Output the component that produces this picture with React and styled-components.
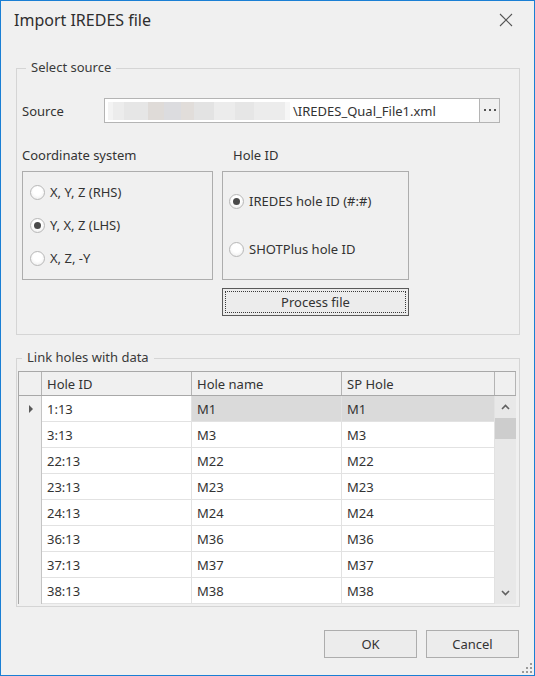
import React from 'react';
import styled, { createGlobalStyle } from 'styled-components';

const GlobalStyle = createGlobalStyle`
  html, body {
    margin: 0;
    padding: 0;
    background: #ffffff;
  }
  * {
    box-sizing: border-box;
  }
`;

const Window = styled.div`
  position: relative;
  width: 535px;
  height: 676px;
  border: 1px solid #1a7fd4;
  background: #f0f0f0;
  display: flex;
  flex-direction: column;
  font-family: 'Noto Sans', 'Open Sans', sans-serif;
  font-size: 13px;
  color: #333;
`;

const TitleBar = styled.div`
  height: 38px;
  display: flex;
  align-items: center;
  justify-content: space-between;
  padding: 0 21px 0 13px;
`;

const Title = styled.span`
  font-size: 16px;
  color: #2e2e2e;
`;

const Body = styled.div`
  flex: 1;
  display: flex;
  flex-direction: column;
  padding: 0 14px 0 15px;
`;

const GroupBox = styled.fieldset`
  margin: ${({ top }) => top}px 0 0;
  padding: ${({ pad }) => pad};
  min-width: 0;
  border: 1px solid #d5d5d5;
`;

const Legend = styled.legend`
  margin-left: 4px;
  padding: 0 5px 3px;
  line-height: 16px;
  color: #3a3a3a;
`;

const SourceRow = styled.div`
  display: flex;
  align-items: center;
  height: 25px;
`;

const FieldLabel = styled.span`
  width: 82px;
`;

const PathInput = styled.div`
  width: 376px;
  height: 25px;
  border: 1px solid #b4b4b4;
  background: #fff;
  display: flex;
  align-items: center;
  padding-left: 3px;
  overflow: hidden;
  white-space: nowrap;
`;

const Redacted = styled.span`
  width: 182px;
  height: 18px;
  margin-right: 3px;
  flex-shrink: 0;
  background: linear-gradient(
    90deg,
    #f3f3f3 0 3%,
    #ececec 3% 9%,
    #e6e6e6 9% 22%,
    #dfdbd8 22% 31%,
    #dcdcdf 31% 40%,
    #e1ddda 40% 47%,
    #e3e3e3 47% 58%,
    #ececec 58% 70%,
    #e6e6e6 70% 80%,
    #ececec 80% 97%,
    #f6f6f6 97% 100%
  );
`;

const DotsButton = styled.div`
  width: 20px;
  height: 25px;
  border: 1px solid #b4b4b4;
  border-left: none;
  background: #f0f0f0;
  display: flex;
  align-items: center;
  justify-content: center;
`;

const OptionsRow = styled.div`
  display: flex;
  gap: 9px;
  margin-top: 24px;
`;

const Column = styled.div`
  width: ${({ w }) => w}px;
  display: flex;
  flex-direction: column;
`;

const SectionLabel = styled.div`
  line-height: 16px;
  margin-bottom: 8px;
  padding-left: ${({ indent }) => indent || 0}px;
`;

const OptionBox = styled.div`
  height: 109px;
  border: 1px solid #adadad;
  display: flex;
  flex-direction: column;
  gap: ${({ gap }) => gap}px;
  padding: ${({ pt }) => pt}px 0 0 ${({ pl }) => pl}px;
`;

const RadioRow = styled.label`
  display: flex;
  align-items: center;
  height: 16px;
  gap: 5px;
`;

const RadioCircle = styled.span`
  position: relative;
  width: 15px;
  height: 15px;
  border-radius: 50%;
  border: 1px solid #b8b8b8;
  background: radial-gradient(circle at 50% 40%, #ffffff 40%, #e8e8e8 100%);
  flex-shrink: 0;

  &::after {
    content: '';
    display: ${({ checked }) => (checked ? 'block' : 'none')};
    position: absolute;
    left: 3px;
    top: 3px;
    width: 7px;
    height: 7px;
    border-radius: 50%;
    background: #4a4a4a;
  }
`;

const Button = styled.div`
  width: ${({ w }) => w}px;
  height: 28px;
  border: 1px solid ${({ focused }) => (focused ? '#5a5a5a' : '#adadad')};
  background: #ececec;
  display: flex;
  align-items: center;
  justify-content: center;
  margin-top: ${({ mt }) => mt || 0}px;
  padding: 2px;
`;

const FocusRect = styled.div`
  width: 100%;
  height: 100%;
  border: 1px dotted #3a3a3a;
  display: flex;
  align-items: center;
  justify-content: center;
`;

const Grid = styled.div`
  width: 498px;
  display: flex;
  flex-direction: column;
  border-top: 1px solid #a8a8a8;
  border-left: 1px solid #a8a8a8;
  background: #f0f0f0;
`;

const COLS = '23px 150px 150px 153px';

const HeaderRow = styled.div`
  display: grid;
  grid-template-columns: ${COLS} 21px;
  height: 24px;
  border-bottom: 1px solid #a8a8a8;
`;

const HeaderCell = styled.div`
  display: flex;
  align-items: center;
  padding-left: 5px;
  border-right: 1px solid #b4b4b4;
`;

const GridBody = styled.div`
  display: flex;
`;

const Rows = styled.div`
  display: flex;
  flex-direction: column;
`;

const DataRow = styled.div`
  display: grid;
  grid-template-columns: ${COLS};
  height: 26px;
`;

const RowHeader = styled.div`
  display: flex;
  align-items: center;
  padding-left: 10px;
  border-right: 1px solid #c4c4c4;
  background: #f0f0f0;
`;

const Marker = styled.span`
  width: 0;
  height: 0;
  border-left: 4px solid #5a5a5a;
  border-top: 4px solid transparent;
  border-bottom: 4px solid transparent;
`;

const Cell = styled.div`
  display: flex;
  align-items: center;
  padding-left: 5px;
  border-right: 1px solid #e2e2e2;
  border-bottom: 1px solid #e2e2e2;
  background: ${({ selected }) => (selected ? '#dadada' : '#ffffff')};
`;

const ScrollBar = styled.div`
  width: 21px;
  display: flex;
  flex-direction: column;
  background: #e8e8e8;
`;

const ScrollArrow = styled.div`
  height: 22px;
  display: flex;
  align-items: center;
  justify-content: center;
`;

const ScrollThumb = styled.div`
  height: 21px;
  background: #cdcdcd;
`;

const ScrollTrack = styled.div`
  flex: 1;
`;

const Footer = styled.div`
  display: flex;
  justify-content: flex-end;
  gap: 9px;
  margin-top: 23px;
  padding-right: 1px;
`;

const Grip = styled.svg`
  position: absolute;
  right: 1px;
  bottom: 1px;
`;

const rows = [
  ['1:13', 'M1', 'M1'],
  ['3:13', 'M3', 'M3'],
  ['22:13', 'M22', 'M22'],
  ['23:13', 'M23', 'M23'],
  ['24:13', 'M24', 'M24'],
  ['36:13', 'M36', 'M36'],
  ['37:13', 'M37', 'M37'],
  ['38:13', 'M38', 'M38'],
];

const Chevron = ({ up }) => (
  <svg width="9" height="6" viewBox="0 0 9 6">
    <polyline
      points={up ? '1,5 4.5,1.5 8,5' : '1,1 4.5,4.5 8,1'}
      fill="none"
      stroke="#606060"
      strokeWidth="1.6"
    />
  </svg>
);

const Radio = ({ checked, children }) => (
  <RadioRow>
    <RadioCircle checked={checked} />
    {children}
  </RadioRow>
);

const App = () => {
  return (
    <>
      <GlobalStyle />
      <Window>
        <TitleBar>
          <Title>Import IREDES file</Title>
          <svg width="14" height="14" viewBox="0 0 14 14">
            <path d="M1 1 L13 13 M13 1 L1 13" stroke="#555" strokeWidth="1.1" />
          </svg>
        </TitleBar>
        <Body>
          <GroupBox top={20} pad="20px 18px 18px 5px">
            <Legend>Select source</Legend>
            <SourceRow>
              <FieldLabel>Source</FieldLabel>
              <PathInput>
                <Redacted />
                \IREDES_Qual_File1.xml
              </PathInput>
              <DotsButton>
                <svg width="12" height="3" viewBox="0 0 12 3">
                  <rect x="0" y="0" width="2" height="2" fill="#555" />
                  <rect x="5" y="0" width="2" height="2" fill="#555" />
                  <rect x="10" y="0" width="2" height="2" fill="#555" />
                </svg>
              </DotsButton>
            </SourceRow>
            <OptionsRow>
              <Column w={191}>
                <SectionLabel>Coordinate system</SectionLabel>
                <OptionBox pt={12} pl={7} gap={17}>
                  <Radio>X, Y, Z (RHS)</Radio>
                  <Radio checked>Y, X, Z (LHS)</Radio>
                  <Radio>X, Z, -Y</Radio>
                </OptionBox>
              </Column>
              <Column w={187}>
                <SectionLabel indent={11}>Hole ID</SectionLabel>
                <OptionBox pt={21} pl={6} gap={32}>
                  <Radio checked>IREDES hole ID (#:#)</Radio>
                  <Radio>SHOTPlus hole ID</Radio>
                </OptionBox>
                <Button w={187} mt={8} focused>
                  <FocusRect>Process file</FocusRect>
                </Button>
              </Column>
            </OptionsRow>
          </GroupBox>

          <GroupBox top={14} pad="3px 3px 2px 1px">
            <Legend>Link holes with data</Legend>
            <Grid>
              <HeaderRow>
                <HeaderCell />
                <HeaderCell>Hole ID</HeaderCell>
                <HeaderCell>Hole name</HeaderCell>
                <HeaderCell>SP Hole</HeaderCell>
                <HeaderCell />
              </HeaderRow>
              <GridBody>
                <Rows>
                  {rows.map((r, i) => (
                    <DataRow key={r[0]}>
                      <RowHeader>{i === 0 && <Marker />}</RowHeader>
                      <Cell>{r[0]}</Cell>
                      <Cell selected={i === 0}>{r[1]}</Cell>
                      <Cell selected={i === 0}>{r[2]}</Cell>
                    </DataRow>
                  ))}
                </Rows>
                <ScrollBar>
                  <ScrollArrow>
                    <Chevron up />
                  </ScrollArrow>
                  <ScrollThumb />
                  <ScrollTrack />
                  <ScrollArrow>
                    <Chevron />
                  </ScrollArrow>
                </ScrollBar>
              </GridBody>
            </Grid>
          </GroupBox>

          <Footer>
            <Button w={93}>OK</Button>
            <Button w={93}>Cancel</Button>
          </Footer>
        </Body>
        <Grip width="12" height="12" viewBox="0 0 12 12">
          {[
            [9, 1],
            [9, 5],
            [5, 5],
            [9, 9],
            [5, 9],
            [1, 9],
          ].map(([x, y]) => (
            <rect key={`${x}-${y}`} x={x} y={y} width="2" height="2" fill="#9a9a9a" />
          ))}
        </Grip>
      </Window>
    </>
  );
};

export default App;
